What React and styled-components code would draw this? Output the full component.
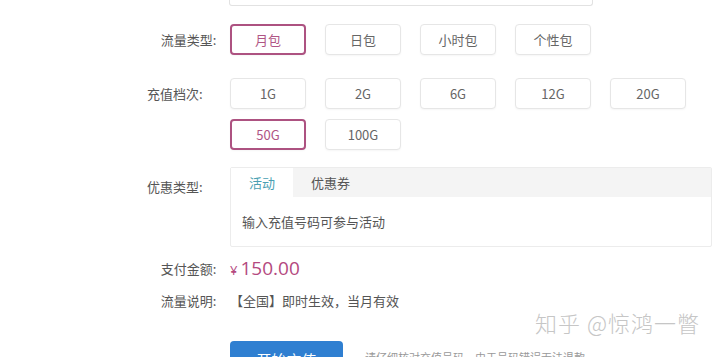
import React, { useState } from "react";
import styled, { createGlobalStyle } from "styled-components";

const GlobalStyle = createGlobalStyle`
    html, body {
        margin: 0;
        padding: 0;
        background: #fff;
        font-family: "Noto Sans CJK SC", "Noto Sans", sans-serif;
        overflow: hidden;
    }
`;

const Page = styled.div`
    position: relative;
    width: 718px;
    height: 357px;
    overflow: hidden;
    padding-left: 147px;
    box-sizing: border-box;
`;

const TopField = styled.div`
    margin-left: 82px;
    width: 362px;
    height: 5px;
    border: 1px solid #e2e2e2;
    border-top: none;
    border-radius: 0 0 3px 3px;
`;

const Row = styled.div`
    display: flex;
    align-items: ${(p) => p.align || "flex-start"};
    margin-top: ${(p) => p.top || 0}px;
`;

const Label = styled.div`
    width: 83px;
    flex-shrink: 0;
    font-size: 13px;
    color: #555;
    line-height: ${(p) => p.lh || 30}px;
    padding-top: ${(p) => p.pt || 0}px;
`;

const Options = styled.div`
    display: flex;
    flex-wrap: wrap;
    gap: 10px 19px;
    width: 480px;
`;

const Option = styled.button`
    width: 76px;
    height: 31px;
    box-sizing: border-box;
    background: #fff;
    border: ${(p) => (p.active ? "2px solid #ad5281" : "1px solid #e6e6e6")};
    border-radius: 4px;
    box-shadow: 0 1px 2px rgba(0, 0, 0, 0.04);
    font-family: inherit;
    font-size: 13px;
    color: ${(p) => (p.active ? "#b05585" : "#666")};
    padding: 0;
    cursor: pointer;
`;

const TabBox = styled.div`
    width: 482px;
    height: 80px;
    box-sizing: border-box;
    border: 1px solid #ececec;
    border-radius: 2px;
`;

const TabHead = styled.div`
    display: flex;
    height: 29px;
    background: #f4f4f4;
`;

const Tab = styled.div`
    padding: 0 18px;
    line-height: 29px;
    font-size: 13px;
    background: ${(p) => (p.active ? "#fff" : "transparent")};
    color: ${(p) => (p.active ? "#4a9fb3" : "#555")};
`;

const TabBody = styled.div`
    padding: 0 11px;
    line-height: 50px;
    font-size: 13px;
    color: #555;
`;

const Amount = styled.div`
    color: #b4497f;
    font-size: 19px;
    line-height: 24px;
    font-family: "Open Sans", "Noto Sans", sans-serif;
`;

const Yen = styled.span`
    font-size: 13px;
    margin-right: 3px;
`;

const Text = styled.div`
    font-size: 13px;
    color: #555;
    line-height: 22px;
`;

const Actions = styled.div`
    display: flex;
    align-items: flex-start;
    margin-top: 29px;
    margin-left: 83px;
    gap: 22px;
`;

const SubmitButton = styled.button`
    width: 113px;
    height: 36px;
    background: #2f7fd1;
    border: none;
    border-radius: 4px;
    color: #fff;
    font-family: inherit;
    font-size: 15px;
    padding: 0;
`;

const Hint = styled.div`
    font-size: 11px;
    color: #999;
    padding-top: 8px;
`;

const Watermark = styled.div`
    position: absolute;
    right: 18px;
    top: 306px;
    font-size: 22px;
    font-weight: 300;
    color: #c6c6c6;
    letter-spacing: 1px;
    pointer-events: none;
`;

const types = ["月包", "日包", "小时包", "个性包"];
const levels = ["1G", "2G", "6G", "12G", "20G", "50G", "100G"];

export default function App() {
    const [type, setType] = useState("月包");
    const [level, setLevel] = useState("50G");
    const [tab, setTab] = useState("活动");

    return (
        <Page>
            <GlobalStyle />
            <TopField />
            <Row align="center" top={18}>
                <Label>流量类型:</Label>
                <Options>
                    {types.map((t) => (
                        <Option key={t} active={t === type} onClick={() => setType(t)}>
                            {t}
                        </Option>
                    ))}
                </Options>
            </Row>
            <Row top={23}>
                <Label lh={31}>充值档次:</Label>
                <Options>
                    {levels.map((l) => (
                        <Option key={l} active={l === level} onClick={() => setLevel(l)}>
                            {l}
                        </Option>
                    ))}
                </Options>
            </Row>
            <Row top={17}>
                <Label lh={22} pt={9}>优惠类型:</Label>
                <TabBox>
                    <TabHead>
                        {["活动", "优惠券"].map((t) => (
                            <Tab key={t} active={t === tab} onClick={() => setTab(t)}>
                                {t}
                            </Tab>
                        ))}
                    </TabHead>
                    <TabBody>
                        {tab === "活动" ? "输入充值号码可参与活动" : "暂无可用优惠券"}
                    </TabBody>
                </TabBox>
            </Row>
            <Row align="center" top={9}>
                <Label lh={24}>支付金额:</Label>
                <Amount>
                    <Yen>¥</Yen>150.00
                </Amount>
            </Row>
            <Row align="center" top={8}>
                <Label lh={22}>流量说明:</Label>
                <Text>【全国】即时生效，当月有效</Text>
            </Row>
            <Actions>
                <SubmitButton>开始充值</SubmitButton>
                <Hint>请仔细核对充值号码，由于号码错误无法退款</Hint>
            </Actions>
            <Watermark>知乎 @惊鸿一瞥</Watermark>
        </Page>
    );
}
